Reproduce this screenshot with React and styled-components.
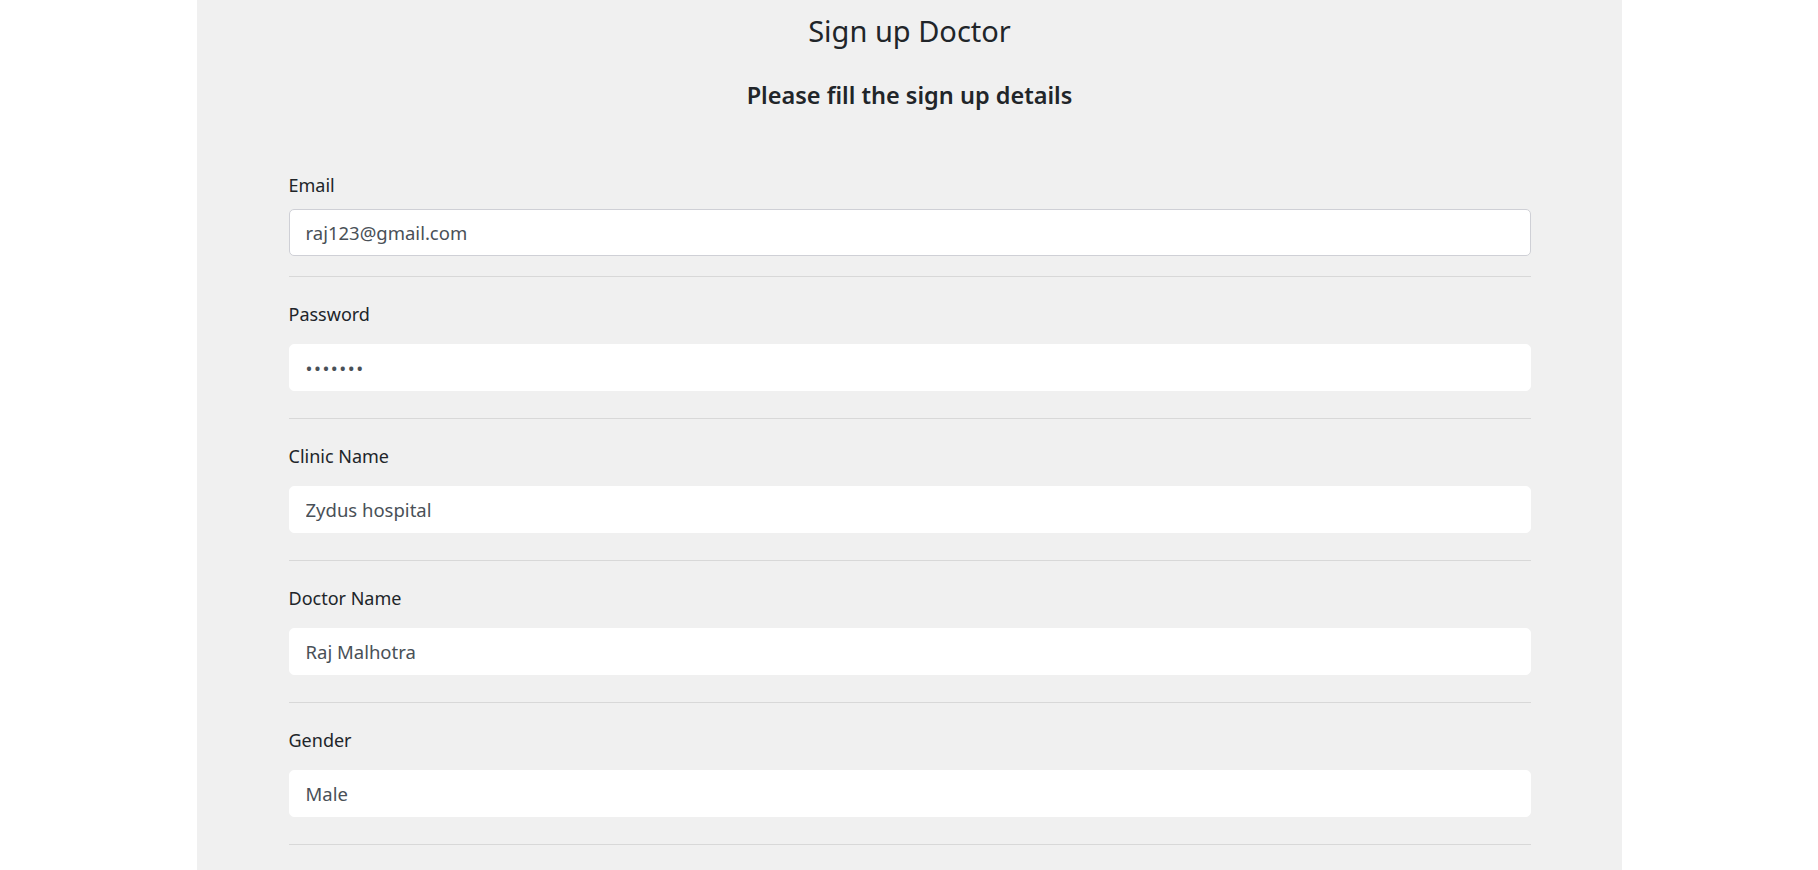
import React from "react";
import styled, { createGlobalStyle } from "styled-components";

const GlobalStyle = createGlobalStyle`
  html, body {
    margin: 0;
    padding: 0;
    background: #ffffff;
  }
  body {
    font-family: "Noto Sans", "Open Sans", sans-serif;
    color: #212529;
  }
`;

const fields = [
  { label: "Email", type: "email", value: "raj123@gmail.com" },
  { label: "Password", type: "password", value: "1234567" },
  { label: "Clinic Name", type: "text", value: "Zydus hospital" },
  { label: "Doctor Name", type: "text", value: "Raj Malhotra" },
  { label: "Gender", type: "text", value: "Male" },
];

const App = () => {
  return (
    <>
      <GlobalStyle />
      <Panel>
        <Title>Sign up Doctor</Title>
        <Subtitle>Please fill the sign up details</Subtitle>
        <Form onSubmit={(e) => e.preventDefault()}>
          {fields.map((f, i) => (
            <Field key={f.label} $first={i === 0}>
              <Label htmlFor={"f" + i}>{f.label}</Label>
              <Input
                id={"f" + i}
                type={f.type}
                defaultValue={f.value}
                $outlined={i === 0}
              />
              <Divider $first={i === 0} />
            </Field>
          ))}
        </Form>
      </Panel>
    </>
  );
};

const Panel = styled.div`
  width: 1425px;
  min-height: 100vh;
  box-sizing: border-box;
  margin: 0 auto;
  padding: 13px 91px 0 92px;
  background: #f0f0f0;
`;

const Title = styled.h2`
  margin: 0;
  font-size: 29px;
  line-height: 36px;
  font-weight: 400;
  text-align: center;
  color: #212529;
`;

const Subtitle = styled.h4`
  margin: 31px 0 0;
  font-size: 23.5px;
  line-height: 30px;
  font-weight: 600;
  text-align: center;
  color: #212529;
`;

const Form = styled.form`
  display: flex;
  flex-direction: column;
  margin-top: 63px;
`;

const Field = styled.div`
  display: flex;
  flex-direction: column;
  padding-top: ${(p) => (p.$first ? "0" : "25px")};
`;

const Label = styled.label`
  font-size: 18px;
  line-height: 24px;
  color: #212529;
`;

const Input = styled.input`
  box-sizing: border-box;
  width: 100%;
  height: 47px;
  margin-top: ${(p) => (p.$outlined ? "12px" : "18px")};
  padding: 0 16px;
  border: 1px solid ${(p) => (p.$outlined ? "#cfd0d6" : "#ffffff")};
  border-radius: 5px;
  background: #ffffff;
  font-family: "Noto Sans", "Open Sans", sans-serif;
  font-size: 18.5px;
  color: #495057;
  outline: none;

  &[type="password"] {
    letter-spacing: 1.5px;
  }
`;

const Divider = styled.hr`
  width: 100%;
  margin: ${(p) => (p.$first ? "20px" : "27px")} 0 0;
  border: 0;
  border-top: 1px solid #d8d8d8;
`;

export default App;
